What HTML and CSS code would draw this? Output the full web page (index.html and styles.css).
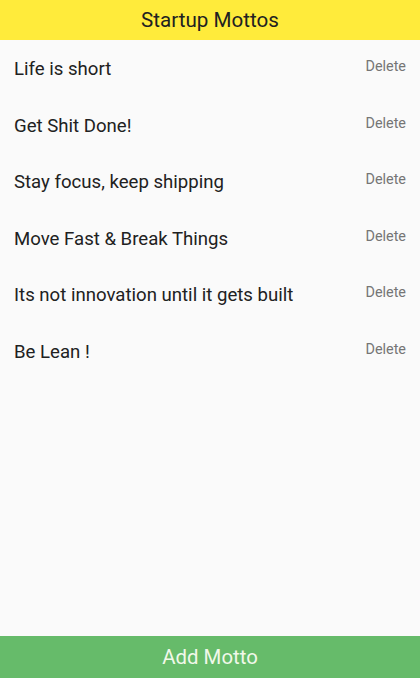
FILE: index.html
```html
<!DOCTYPE html>
<html>
<head>
<meta charset="utf-8">
<link rel="stylesheet" href="styles.css">
</head>
<body>
<div class="app">
  <header class="header">Startup Mottos</header>
  <ul class="list">
    <li class="row"><span class="motto">Life is short</span><span class="delete">Delete</span></li>
    <li class="row"><span class="motto">Get Shit Done!</span><span class="delete">Delete</span></li>
    <li class="row"><span class="motto">Stay focus, keep shipping</span><span class="delete">Delete</span></li>
    <li class="row"><span class="motto">Move Fast &amp; Break Things</span><span class="delete">Delete</span></li>
    <li class="row"><span class="motto">Its not innovation until it gets built</span><span class="delete">Delete</span></li>
    <li class="row"><span class="motto">Be Lean !</span><span class="delete">Delete</span></li>
  </ul>
  <footer class="footer">Add Motto</footer>
</div>
</body>
</html>
```
FILE: styles.css
```css
html, body {
  margin: 0;
  padding: 0;
  height: 100%;
}
body {
  font-family: Roboto, "Noto Sans", sans-serif;
  background: #fafafa;
}
.app {
  display: flex;
  flex-direction: column;
  height: 678px;
}
.header {
  height: 40px;
  background: #ffeb3b;
  color: #212121;
  font-size: 20.6px;
  display: flex;
  align-items: center;
  justify-content: center;
}
.list {
  list-style: none;
  margin: 0;
  padding: 0;
  flex: 1;
}
.row {
  height: 56.6px;
  box-sizing: border-box;
  padding: 17px 14px 0 14px;
  display: flex;
  justify-content: space-between;
  align-items: flex-start;
}
.motto {
  font-size: 18.6px;
  line-height: 24px;
  color: #212121;
}
.delete {
  font-size: 14.4px;
  line-height: 18px;
  padding-top: 1px;
  color: #757575;
}
.footer {
  height: 42px;
  background: #66bb6a;
  color: #f1f8e9;
  font-size: 20.4px;
  display: flex;
  align-items: center;
  justify-content: center;
}
```
